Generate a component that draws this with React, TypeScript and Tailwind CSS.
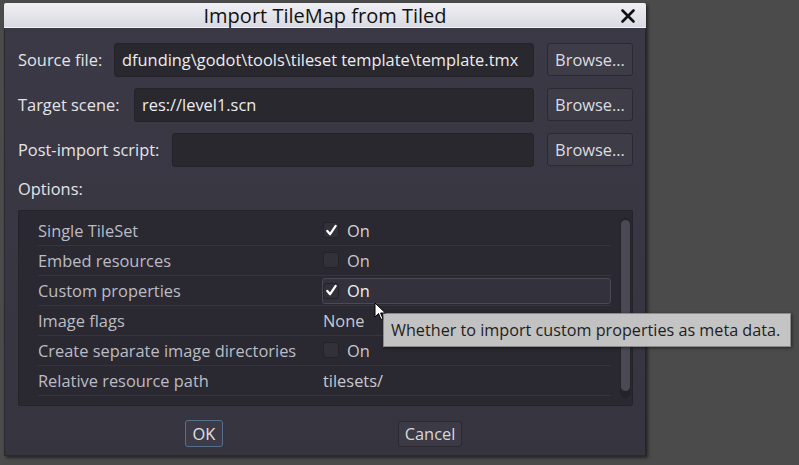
import React from "react";

const font = { fontFamily: '"Open Sans", "Noto Sans", sans-serif' };

function Check({ checked }: { checked: boolean }) {
  return (
    <div className="w-[16px] h-[16px] rounded-[3px] bg-[#323139] border border-[#24232a] flex items-center justify-center">
      {checked && (
        <svg width="13" height="13" viewBox="0 0 14 14">
          <path d="M2.5 7.5 L5.5 11 L11.5 2" fill="none" stroke="#ffffff" strokeWidth="2.4" strokeLinecap="round" strokeLinejoin="round" />
        </svg>
      )}
    </div>
  );
}

function FileRow({ label, value, inputLeft }: { label: string; value: string; inputLeft: number }) {
  return (
    <div className="flex items-center h-[33px]">
      <div className="text-[#e4e4e8] text-[16.4px] shrink-0 pt-[2px]" style={{ width: inputLeft }}>
        {label}
      </div>
      <div className="flex-1 h-[34px] bg-[#29282f] border border-[#24232a] rounded-[3px] flex items-center pl-[7px] pt-[2px] text-[#ececf0] text-[16.4px] overflow-hidden whitespace-nowrap">
        {value}
      </div>
      <div className="ml-[13px] w-[86px] h-[33px] bg-[#3d3c47] border border-[#2b2a32] rounded-[3px] flex items-center justify-center pt-[2px] text-[#dcdce0] text-[16.4px]">
        Browse...
      </div>
    </div>
  );
}

function OptRow({ label, children }: { label: string; children: React.ReactNode }) {
  return (
    <div className="flex items-center h-[30px] mr-[21px] ml-[19px] border-b border-[#36353f]">
      <div className="w-[285px] text-[#bcbcc4] text-[16.4px] pt-[1px]">{label}</div>
      <div className="flex-1 flex items-center">{children}</div>
    </div>
  );
}

export default function App() {
  return (
    <div className="w-[799px] h-[465px] bg-[#4b4b4b] relative overflow-hidden pt-[3px] pl-[4px]" style={font}>
      <div className="w-[642px] h-[453px] flex flex-col shadow-[2px_2px_3px_rgba(0,0,0,0.5)]">
        {/* title bar */}
        <div className="h-[25px] bg-gradient-to-b from-[#efeff4] to-[#dadae2] border-b border-[#f4f4f8] relative flex items-center justify-center rounded-t-[2px]">
          <span className="text-[20px] text-[#111] leading-none mt-[1px]">Import TileMap from Tiled</span>
          <svg className="absolute right-[10px] top-[5px]" width="16" height="16" viewBox="0 0 16 16">
            <path d="M2.5 2.5 L13.5 13.5 M13.5 2.5 L2.5 13.5" stroke="#111" strokeWidth="2.6" strokeLinecap="round" />
          </svg>
        </div>
        {/* body */}
        <div className="flex-1 bg-gradient-to-b from-[#3a3945] to-[#35343f] border-l border-[#2a2930] border-r border-r-[#25242b] border-b border-b-[#2a2930] pl-[13px] pr-[12px] pt-[15px] flex flex-col">
          <div className="flex flex-col gap-[12px]">
            <FileRow label="Source file:" value="dfunding\godot\tools\tileset template\template.tmx" inputLeft={96} />
            <FileRow label="Target scene:" value="res://level1.scn" inputLeft={116} />
            <FileRow label="Post-import script:" value="" inputLeft={154} />
          </div>
          <div className="mt-[9px] h-[26px] flex items-center pt-[2px] text-[#e4e4e8] text-[16.4px]">Options:</div>
          <div className="mt-[9px] h-[196px] bg-[#2a2931] border border-[#24232a] rounded-[2px] relative pt-[5px]">
            <OptRow label="Single TileSet">
              <Check checked />
              <span className="ml-[8px] pt-[1px] text-[#d4d4da] text-[16.4px]">On</span>
            </OptRow>
            <OptRow label="Embed resources">
              <Check checked={false} />
              <span className="ml-[8px] pt-[1px] text-[#c8c8ce] text-[16.4px]">On</span>
            </OptRow>
            <OptRow label="Custom properties">
              <div className="ml-[-1px] w-[289px] h-[26px] bg-[#33323c] border border-[#4a4954] rounded-[3px] flex items-center">
                <Check checked />
                <span className="ml-[8px] pt-[1px] text-[#f0f0f4] text-[16.4px]">On</span>
              </div>
            </OptRow>
            <OptRow label="Image flags">
              <span className="pt-[1px] text-[#c8c8ce] text-[16.4px]">None</span>
            </OptRow>
            <OptRow label="Create separate image directories">
              <Check checked={false} />
              <span className="ml-[8px] pt-[1px] text-[#c8c8ce] text-[16.4px]">On</span>
            </OptRow>
            <OptRow label="Relative resource path">
              <span className="pt-[1px] text-[#c8c8ce] text-[16.4px]">tilesets/</span>
            </OptRow>
            {/* scrollbar */}
            <div className="absolute right-[1px] top-[7px] w-[11px] h-[180px] rounded-full bg-[#24232a]">
              <div className="mx-auto mt-[2px] w-[9px] h-[171px] rounded-full bg-[#4a4954]" />
            </div>
          </div>
          <div className="mt-[14px] flex items-center">
            <div className="ml-[167px] w-[38px] h-[27px] bg-[#3c3b47] border border-[#55708e] rounded-[3px] flex items-center justify-center pt-[1px] text-[#e0e0e4] text-[16.4px]">
              OK
            </div>
            <div className="ml-[175px] w-[64px] h-[26px] bg-[#3b3a45] border border-[#2b2a32] rounded-[3px] flex items-center justify-center pt-[1px] text-[#d8d8dc] text-[16.4px]">
              Cancel
            </div>
          </div>
        </div>
      </div>

      {/* tooltip */}
      <div className="absolute left-[383px] top-[313px] w-[408px] h-[34px] bg-[#cacaca]/95 border border-[#8a8a8a] shadow-[1px_1px_3px_rgba(0,0,0,0.5)] flex items-center pl-[7px] pt-[1px] text-[16.2px] text-[#1e1e1e] whitespace-nowrap">
        Whether to import custom properties as meta data.
      </div>

      {/* mouse cursor */}
      <svg className="absolute left-[374px] top-[302px]" width="14" height="20" viewBox="0 0 14 20">
        <path d="M1 1 L1 15 L4.5 11.5 L7 17.5 L9 16.7 L6.6 11 L11.5 11 Z" fill="#ffffff" stroke="#000000" strokeWidth="1" strokeLinejoin="round" />
      </svg>
    </div>
  );
}
